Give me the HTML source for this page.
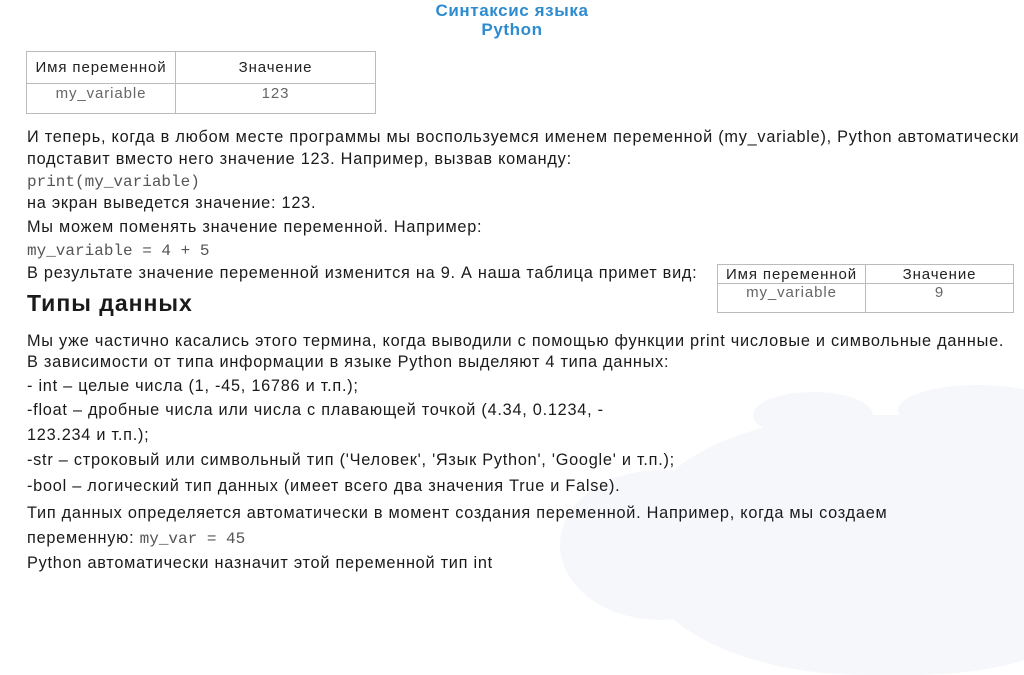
<!DOCTYPE html>
<html><head><meta charset="utf-8"><style>
body{margin:0;width:1024px;height:574px;background:#fff;position:relative;overflow:hidden;font-family:"Liberation Sans","DejaVu Sans",sans-serif;color:#1a1a1a}
.l{position:absolute;left:27px;white-space:nowrap;font-size:16.3px;line-height:20px;letter-spacing:0.75px}
.m{font-family:"Liberation Mono",monospace;color:#555;font-size:16px;letter-spacing:0}
.t{position:absolute;font-weight:bold;color:#2d8bd0;font-size:17px;letter-spacing:0.6px;text-align:center;width:240px;left:392px;line-height:19px}
table{position:absolute;border-collapse:collapse;font-size:15px;letter-spacing:0.9px}
td{border:1px solid #bbb;text-align:center;padding:0}
.blob{position:absolute;background:#f6f7fb;border-radius:50%}
</style></head><body>
<div class="blob" style="left:753px;top:392px;width:120px;height:46px"></div>
<div class="blob" style="left:898px;top:385px;width:160px;height:50px"></div>
<div class="blob" style="left:640px;top:415px;width:500px;height:260px;border-radius:45%"></div>
<div class="blob" style="left:560px;top:470px;width:200px;height:150px"></div>
<div class="t" style="top:1px">Синтаксис языка<br>Python</div>
<table style="left:26px;top:51px;width:350px">
<tr style="height:32px"><td style="width:148px;color:#222">Имя переменной</td><td style="color:#222">Значение</td></tr>
<tr style="height:30px;vertical-align:top"><td style="color:#666;padding-top:1px">my_variable</td><td style="color:#666;padding-top:1px">123</td></tr>
</table>
<div class="l" style="top:127px">И теперь, когда в любом месте программы мы воспользуемся именем  переменной (my_variable), Python автоматически</div>
<div class="l" style="top:149px">подставит вместо него  значение 123. Например, вызвав команду:</div>
<div class="l m" style="top:172px">print(my_variable)</div>
<div class="l" style="top:193px">на экран выведется значение: 123.</div>
<div class="l" style="top:217px">Мы можем поменять значение переменной. Например:</div>
<div class="l m" style="top:241px">my_variable = 4 + 5</div>
<div class="l" style="top:263px">В результате значение переменной изменится на 9. А наша таблица  примет вид:</div>
<table style="left:717px;top:264px;width:297px">
<tr style="height:19px"><td style="width:147px;color:#222">Имя переменной</td><td style="color:#222">Значение</td></tr>
<tr style="height:29px;vertical-align:top"><td style="color:#666">my_variable</td><td style="color:#666">9</td></tr>
</table>
<div class="l" style="top:290px;font-size:23px;font-weight:bold;line-height:26px;letter-spacing:1px">Типы данных</div>
<div class="l" style="top:331px">Мы уже частично касались этого термина, когда выводили с помощью  функции print числовые и символьные данные.</div>
<div class="l" style="top:352px">В зависимости от типа  информации в языке Python выделяют 4 типа данных:</div>
<div class="l" style="top:376px">- int – целые числа (1, -45, 16786 и т.п.);</div>
<div class="l" style="top:400px">-float – дробные числа или числа с плавающей точкой (4.34, 0.1234, -</div>
<div class="l" style="top:425px">123.234 и т.п.);</div>
<div class="l" style="top:450px">-str – строковый или символьный тип ('Человек', 'Язык Python', 'Google' и т.п.);</div>
<div class="l" style="top:476px">-bool – логический тип данных (имеет всего два значения True и False).</div>
<div class="l" style="top:503px">Тип данных определяется автоматически в момент создания  переменной. Например, когда мы создаем</div>
<div class="l" style="top:528px">переменную: <span class="m">my_var = 45</span></div>
<div class="l" style="top:553px">Python автоматически назначит этой переменной тип int</div>
</body></html>
